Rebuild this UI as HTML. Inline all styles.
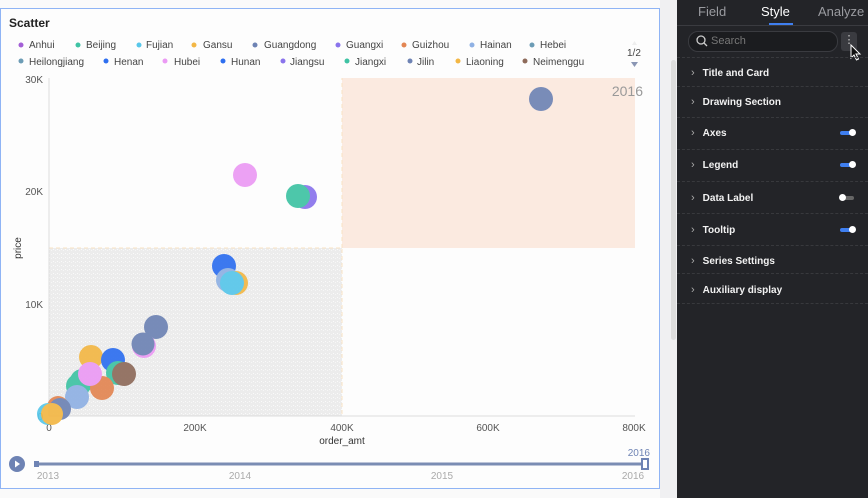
<!DOCTYPE html>
<html><head><meta charset="utf-8"><style>
body{margin:0;width:868px;height:498px;background:#fafafa;font-family:"Liberation Sans",sans-serif;overflow:hidden;position:relative}
.card{position:absolute;left:0;top:8px;width:658px;height:479px;border:1px solid #8fb4f5;background:#fdfdfd}
.panel{position:absolute;left:677px;top:0;width:191px;height:498px;background:#232428;color:#fff}
.tabs{height:25px;border-bottom:1px solid #3a3b40;position:relative;font-size:13px;color:#9a9ba0}
.tabs span{position:absolute;top:4px}
.row{position:absolute;left:0;width:191px;height:1px;border-top:1px dashed #38393d}
.it{position:absolute;left:14px;font-size:10px;font-weight:bold;color:#f2f2f2}
.it:before{content:"›";color:#aaa;font-weight:normal;margin-right:8px;font-size:11px}
.tg{position:absolute;left:163px;width:14px;height:4px;border-radius:2px;background:#3f7ff0}
.tg:after{content:"";position:absolute;right:-2px;top:-2px;width:7px;height:7px;border-radius:50%;background:#fff}
.tg.off{background:#666}.tg.off:after{left:-1px;right:auto}
</style></head><body>
<div style="position:absolute;left:660px;top:0;width:17px;height:498px;background:#f0f0f2"></div>
<div style="position:absolute;left:671px;top:60px;width:5px;height:280px;background:#ddd;border-radius:3px"></div>
<div class="card"></div>
<svg width="660" height="498" style="position:absolute;left:0;top:0" font-family="Liberation Sans, sans-serif">
<defs><pattern id="n" width="4" height="4" patternUnits="userSpaceOnUse"><rect width="4" height="4" fill="#ececec"/><rect x="1" y="1" width="1" height="1" fill="#fafafa"/><rect x="3" y="2" width="1" height="1" fill="#f6f6f6"/></pattern></defs>
<text x="9" y="27" font-size="12" font-weight="bold" fill="#222">Scatter</text>
<g font-size="10" fill="#444">
<circle cx="21" cy="45" r="2.5" fill="#a35fd6"/><text x="29" y="48">Anhui</text>
<circle cx="78" cy="45" r="2.5" fill="#3fc3a4"/><text x="86" y="48">Beijing</text>
<circle cx="139" cy="45" r="2.5" fill="#58c7ea"/><text x="146" y="48">Fujian</text>
<circle cx="194" cy="45" r="2.5" fill="#f3b745"/><text x="203" y="48">Gansu</text>
<circle cx="255" cy="45" r="2.5" fill="#6e83b4"/><text x="264" y="48">Guangdong</text>
<circle cx="338" cy="45" r="2.5" fill="#8a74ec"/><text x="346" y="48">Guangxi</text>
<circle cx="404" cy="45" r="2.5" fill="#e38653"/><text x="412" y="48">Guizhou</text>
<circle cx="472" cy="45" r="2.5" fill="#8fb1e4"/><text x="480" y="48">Hainan</text>
<circle cx="532" cy="45" r="2.5" fill="#6c9cb5"/><text x="540" y="48">Hebei</text>
<circle cx="21" cy="61" r="2.5" fill="#6c9cb5"/><text x="29" y="65">Heilongjiang</text>
<circle cx="106" cy="61" r="2.5" fill="#2e6ff0"/><text x="114" y="65">Henan</text>
<circle cx="165" cy="61" r="2.5" fill="#eb9af4"/><text x="174" y="65">Hubei</text>
<circle cx="223" cy="61" r="2.5" fill="#2e6ff0"/><text x="231" y="65">Hunan</text>
<circle cx="283" cy="61" r="2.5" fill="#8a74ec"/><text x="290" y="65">Jiangsu</text>
<circle cx="347" cy="61" r="2.5" fill="#3fc3a4"/><text x="355" y="65">Jiangxi</text>
<circle cx="410" cy="61" r="2.5" fill="#6e83b4"/><text x="417" y="65">Jilin</text>
<circle cx="458" cy="61" r="2.5" fill="#f3b745"/><text x="466" y="65">Liaoning</text>
<circle cx="525" cy="61" r="2.5" fill="#8e6b5b"/><text x="533" y="65">Neimenggu</text>
<text x="627" y="56">1/2</text></g>
<path d="M631 62h7l-3.5 5z" fill="#8a96b4"/><path d="M632 45h5l-2.5-4z" fill="#eee"/>
<rect x="342" y="78" width="293" height="170" fill="#fbeae0"/>
<rect x="49" y="248" width="293" height="168" fill="url(#n)"/>
<path d="M49 248H342V416M342 248V78" stroke="#f9e2c4" stroke-dasharray="4 3" fill="none"/>
<line x1="49" y1="78" x2="49" y2="416" stroke="#ddd"/>
<line x1="49" y1="416" x2="635" y2="416" stroke="#ddd"/>
<text x="643" y="96" font-size="14" fill="#999" text-anchor="end">2016</text>
<g font-size="10" fill="#555" text-anchor="end"><text x="43" y="83">30K</text><text x="43" y="195">20K</text><text x="43" y="308">10K</text><text x="43" y="420">0</text></g>
<g font-size="10" fill="#555" text-anchor="middle"><text x="49" y="431">0</text><text x="195" y="431">200K</text><text x="342" y="431">400K</text><text x="488" y="431">600K</text><text x="634" y="431">800K</text>
<text x="342" y="444" fill="#333">order_amt</text></g>
<text x="21" y="248" font-size="10" fill="#333" transform="rotate(-90 21 248)" text-anchor="middle">price</text>
<g opacity="0.92">
<circle cx="541" cy="99" r="12" fill="#6e83b4"/>
<circle cx="245" cy="175" r="12" fill="#eb9af4"/>
<circle cx="305" cy="197" r="12" fill="#8a74ec"/>
<circle cx="298" cy="196" r="12" fill="#3fc3a4"/>
<circle cx="224" cy="266" r="12" fill="#2e6ff0"/>
<circle cx="228" cy="280" r="12" fill="#8fb1e4"/>
<circle cx="236" cy="283" r="12" fill="#f3b745"/>
<circle cx="232" cy="283" r="12" fill="#58c7ea"/>
<circle cx="156" cy="327" r="12" fill="#6e83b4"/>
<circle cx="144" cy="346" r="12" fill="#eb9af4"/>
<circle cx="143" cy="344" r="11.5" fill="#6e83b4"/>
<circle cx="91" cy="357" r="12" fill="#f3b745"/>
<circle cx="113" cy="360" r="12" fill="#2e6ff0"/>
<circle cx="82" cy="381" r="12" fill="#3fc3a4"/>
<circle cx="78" cy="386" r="12" fill="#3fc3a4"/>
<circle cx="118" cy="373" r="12" fill="#3fc3a4"/>
<circle cx="124" cy="374" r="12" fill="#8e6b5b"/>
<circle cx="102" cy="388" r="12" fill="#e38653"/>
<circle cx="90" cy="374" r="12" fill="#eb9af4"/>
<circle cx="77" cy="397" r="12" fill="#8fb1e4"/>
<circle cx="58" cy="407" r="11" fill="#e38653"/>
<circle cx="60" cy="409" r="11" fill="#6e83b4"/>
<circle cx="48" cy="414" r="11" fill="#58c7ea"/>
<circle cx="52" cy="414" r="11" fill="#f3b745"/>
</g>
<circle cx="17" cy="464" r="8" fill="#6e83b4"/><path d="M15 460.5v7l5-3.5z" fill="#fff"/>
<line x1="36" y1="464" x2="645" y2="464" stroke="#7a8cb3" stroke-width="3"/>
<rect x="34" y="461" width="5" height="6" fill="#6e83b4"/>
<rect x="642" y="459" width="6" height="10" fill="#fff" stroke="#6e83b4" stroke-width="2"/>
<text x="650" y="456" font-size="10" fill="#6e83b4" text-anchor="end">2016</text>
<g font-size="10" fill="#aaa" text-anchor="middle"><text x="48" y="479">2013</text><text x="240" y="479">2014</text><text x="442" y="479">2015</text><text x="633" y="479">2016</text></g>
</svg>
<div class="panel">
<div class="tabs"><span style="left:21px">Field</span><span style="left:84px;color:#fff">Style</span><span style="left:141px">Analyze</span>
<div style="position:absolute;left:92px;top:23px;width:24px;height:2px;background:#3f7ff0"></div></div>
<div style="position:absolute;left:11px;top:31px;width:148px;height:19px;border:1px solid #3a3b40;border-radius:10px;background:#1b1c1f"></div>
<svg style="position:absolute;left:19px;top:35px" width="12" height="12"><circle cx="5" cy="5" r="4" stroke="#ccc" fill="none" stroke-width="1.3"/><path d="M8 8l3 3" stroke="#ccc" stroke-width="1.3"/></svg>
<div style="position:absolute;left:34px;top:35px;font-size:11px;color:#777">Search</div>
<div style="position:absolute;left:164px;top:32px;width:16px;height:19px;background:#3a3b40;border-radius:3px;color:#ccc;font-size:11px;text-align:center;line-height:16px">⋮</div>
<svg style="position:absolute;left:173px;top:44px" width="12" height="18"><path d="M1 1v13l3-3 2.5 5 2-1-2.5-5h4z" fill="#111" stroke="#fff"/></svg>
<div class="row" style="top:57px"></div>
<div class="it" style="top:67px">Title and Card</div><div class="row" style="top:86px"></div>
<div class="it" style="top:96px">Drawing Section</div><div class="row" style="top:117px"></div>
<div class="it" style="top:127px">Axes</div><div class="tg" style="top:131px"></div><div class="row" style="top:149px"></div>
<div class="it" style="top:159px">Legend</div><div class="tg" style="top:163px"></div><div class="row" style="top:181px"></div>
<div class="it" style="top:192px">Data Label</div><div class="tg off" style="top:196px"></div><div class="row" style="top:213px"></div>
<div class="it" style="top:224px">Tooltip</div><div class="tg" style="top:228px"></div><div class="row" style="top:245px"></div>
<div class="it" style="top:255px">Series Settings</div><div class="row" style="top:273px"></div>
<div class="it" style="top:284px">Auxiliary display</div><div class="row" style="top:303px"></div>
</div>
</body></html>
